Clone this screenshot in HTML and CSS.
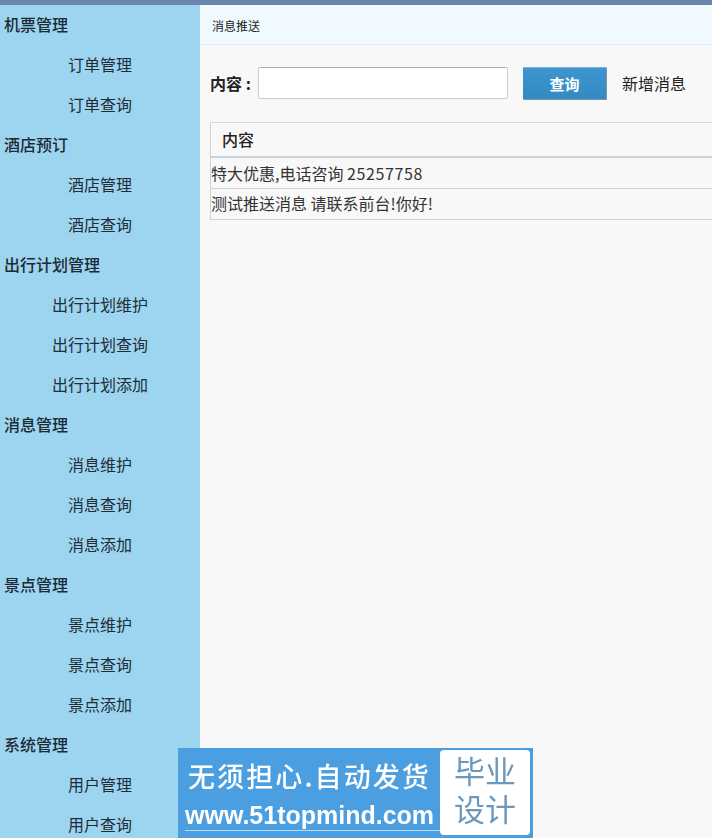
FILE: index.html
```
<!DOCTYPE html>
<html lang="zh">
<head>
<meta charset="utf-8">
<title>消息推送</title>
<link rel="stylesheet" href="styles.css">
</head>
<body>
<div class="topbar"></div>
<div class="layout">
  <nav class="sidebar">
    <div class="group">机票管理</div>
    <a class="item">订单管理</a>
    <a class="item">订单查询</a>
    <div class="group">酒店预订</div>
    <a class="item">酒店管理</a>
    <a class="item">酒店查询</a>
    <div class="group">出行计划管理</div>
    <a class="item">出行计划维护</a>
    <a class="item">出行计划查询</a>
    <a class="item">出行计划添加</a>
    <div class="group">消息管理</div>
    <a class="item">消息维护</a>
    <a class="item">消息查询</a>
    <a class="item">消息添加</a>
    <div class="group">景点管理</div>
    <a class="item">景点维护</a>
    <a class="item">景点查询</a>
    <a class="item">景点添加</a>
    <div class="group">系统管理</div>
    <a class="item">用户管理</a>
    <a class="item">用户查询</a>
  </nav>
  <main class="main">
    <div class="crumb">消息推送</div>
    <form class="search">
      <label class="search-label">内容 :</label>
      <input class="search-input" type="text">
      <button class="search-btn" type="button">查询</button>
      <a class="add-link">新增消息</a>
    </form>
    <div class="table">
      <div class="thead">内容</div>
      <div class="row">特大优惠,电话咨询 <span class="num">25257758</span></div>
      <div class="row row-last">测试推送消息 请联系前台!你好!</div>
    </div>
  </main>
</div>
<aside class="banner">
  <div class="banner-left">
    <div class="banner-title">无须担心.自动发货</div>
    <div class="banner-url">www.51topmind.com</div>
  </div>
  <div class="banner-right">毕业<br>设计</div>
</aside>
</body>
</html>
```
FILE: styles.css
```
html, body {
  margin: 0;
  padding: 0;
  height: 838px;
  overflow: hidden;
  background: #f8f8f8;
  font-family: "Noto Sans CJK SC", "Liberation Sans", sans-serif;
  color: #222;
}
.topbar {
  height: 5px;
  background: #6a86ae;
}
.layout {
  display: flex;
  height: 833px;
}
.sidebar {
  width: 200px;
  flex: none;
  background: #9dd5f0;
  overflow: hidden;
}
.group {
  height: 40px;
  line-height: 38px;
  padding-left: 4px;
  font-size: 16px;
  font-weight: 500;
  color: #1c2a33;
}
.item {
  display: block;
  height: 40px;
  line-height: 38px;
  text-align: center;
  font-size: 16px;
  color: #1f2d36;
}
.main {
  flex: 1;
  min-width: 0;
  background: #f8f8f8;
}
.crumb {
  height: 39px;
  line-height: 41px;
  padding-left: 12px;
  font-size: 12px;
  color: #222;
  background: #f0f9fe;
  border-bottom: 1px solid #e6eef2;
}
.search {
  display: flex;
  align-items: center;
  margin-top: 21px;
  padding-left: 10px;
  height: 34px;
}
.search-label {
  width: 48px;
  font-size: 16px;
  font-weight: 700;
  color: #222;
  white-space: nowrap;
}
.search-input {
  box-sizing: border-box;
  width: 250px;
  height: 32px;
  margin: 0;
  padding: 0 4px;
  background: #fff;
  border: 1px solid #c9ccd0;
  border-top-color: #a9b0b8;
  border-radius: 2px;
}
.search-btn {
  box-sizing: border-box;
  width: 84px;
  height: 33px;
  margin: 0 0 0 15px;
  padding: 0;
  border: 0;
  border-top: 1px solid #7fb4d8;
  border-right: 1px solid #7d93a6;
  border-bottom: 1px solid #7d93a6;
  border-radius: 1px;
  background: linear-gradient(#3f95cf, #3389c2);
  color: #fff;
  font-family: inherit;
  font-size: 15px;
  font-weight: 700;
}
.add-link {
  margin-left: 15px;
  font-size: 16px;
  color: #222;
}
.table {
  margin: 22px 0 0 10px;
  border-left: 1px solid #cfd2d4;
  border-top: 1px solid #d8d8d8;
}
.thead {
  height: 33px;
  line-height: 33px;
  padding-left: 11px;
  font-size: 16px;
  font-weight: 500;
  color: #222;
  border-bottom: 2px solid #c9d0d6;
}
.row {
  height: 30px;
  line-height: 30px;
  font-size: 16px;
  color: #333;
  border-bottom: 1px solid #cfd2d4;
  white-space: nowrap;
}
.row-last {
  line-height: 28px;
}
.num {
  letter-spacing: 0.6px;
}
.banner {
  position: absolute;
  left: 178px;
  top: 748px;
  box-sizing: border-box;
  width: 355px;
  height: 90px;
  display: flex;
  padding: 2px 3px 3px;
  background: #4b9fe0;
}
.banner-left {
  width: 259px;
  flex: none;
  color: #fff;
  overflow: hidden;
  filter: blur(0.4px);
}
.banner-title {
  height: 51px;
  line-height: 51px;
  padding-left: 7px;
  font-size: 27px;
  font-weight: 500;
  letter-spacing: 2.1px;
  white-space: nowrap;
}
.banner-url {
  margin-left: 4px;
  font-family: "Liberation Sans", sans-serif;
  font-size: 25px;
  line-height: 29px;
  font-weight: 700;
  white-space: nowrap;
  border-bottom: 1px solid #b9daf3;
}
.banner-right {
  flex: 1;
  background: #fff;
  border-radius: 4px;
  color: #6b98bd;
  font-size: 31px;
  line-height: 38px;
  text-align: center;
  padding-top: 1px;
  filter: blur(0.4px);
}
```
